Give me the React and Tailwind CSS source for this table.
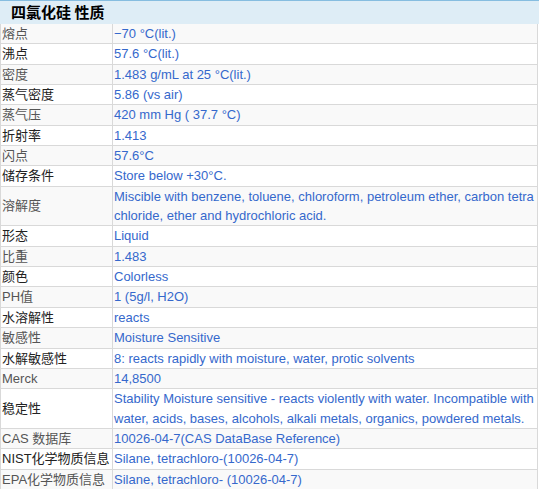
const rows = [
  ['熔点', ['−70 °C(lit.)']],
  ['沸点', ['57.6 °C(lit.)']],
  ['密度', ['1.483 g/mL at 25 °C(lit.)']],
  ['蒸气密度', ['5.86 (vs air)']],
  ['蒸气压', ['420 mm Hg ( 37.7 °C)']],
  ['折射率', ['1.413']],
  ['闪点', ['57.6°C']],
  ['储存条件', ['Store below +30°C.']],
  ['溶解度', ['Miscible with benzene, toluene, chloroform, petroleum ether, carbon tetra', 'chloride, ether and hydrochloric acid.']],
  ['形态', ['Liquid']],
  ['比重', ['1.483']],
  ['颜色', ['Colorless']],
  ['PH值', ['1 (5g/l, H2O)']],
  ['水溶解性', ['reacts']],
  ['敏感性', ['Moisture Sensitive']],
  ['水解敏感性', ['8: reacts rapidly with moisture, water, protic solvents']],
  ['Merck', ['14,8500']],
  ['稳定性', ['Stability Moisture sensitive - reacts violently with water. Incompatible with', 'water, acids, bases, alcohols, alkali metals, organics, powdered metals.']],
  ['CAS 数据库', ['10026-04-7(CAS DataBase Reference)']],
  ['NIST化学物质信息', ['Silane, tetrachloro-(10026-04-7)']],
  ['EPA化学物质信息', ['Silane, tetrachloro- (10026-04-7)']],
]

export default function App() {
  return (
    <div className="w-[539px] h-[489px] bg-white" style={{ fontFamily: '"Liberation Sans", Arial, "Noto Sans CJK SC", sans-serif' }}>
      <div className="h-[24px] border-t border-[#86bde0] bg-[#deedf6] pl-[11px] flex items-center">
        <span className="text-[15px] font-bold text-black" style={{ fontFamily: '"Noto Sans CJK SC", sans-serif' }}>四氯化硅 性质</span>
      </div>
      <div className="border-l border-r border-[#d9d9d9] w-[538px]">
        {rows.map(([label, lines], i) => (
          <div key={label} className={`flex border-b border-[#d9d9d9] ${i % 2 === 0 ? 'bg-[#f9f9f9]' : 'bg-white'}`}>
            <div
              className={`w-[112px] shrink-0 border-r border-[#d9d9d9] pl-[1px] flex items-center text-[13px] leading-[19.35px] whitespace-nowrap ${i % 2 === 0 ? 'text-[#555]' : 'text-[#222]'}`}
            >
              {label}
            </div>
            <div className="pl-[1px] text-[13px] leading-[19.35px] text-[#3568cc] whitespace-nowrap">
              {lines.map((l) => (
                <div key={l}>{l}</div>
              ))}
            </div>
          </div>
        ))}
      </div>
    </div>
  )
}
